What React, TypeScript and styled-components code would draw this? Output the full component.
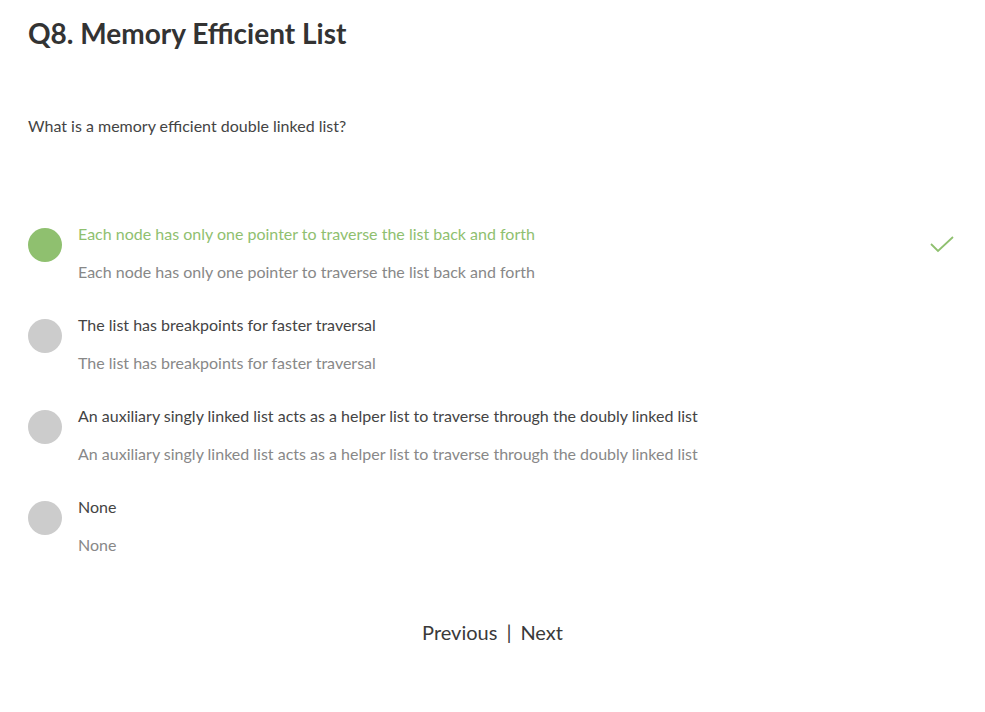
import React from 'react';
import styled, { createGlobalStyle } from 'styled-components';

const GlobalStyle = createGlobalStyle`
	body {
		margin: 0;
		background: #fff;
		font-family: Lato, "Noto Sans", sans-serif;
		color: #333;
	}
`;

interface Option {
	text: string;
	correct: boolean;
}

const options: Option[] = [
	{ text: 'Each node has only one pointer to traverse the list back and forth', correct: true },
	{ text: 'The list has breakpoints for faster traversal', correct: false },
	{ text: 'An auxiliary singly linked list acts as a helper list to traverse through the doubly linked list', correct: false },
	{ text: 'None', correct: false },
];

const Page = styled.div`
	padding: 14px 28px 0 28px;
	width: 985px;
	box-sizing: border-box;
`;

const Title = styled.h1`
	margin: 0;
	font-size: 28px;
	font-weight: 700;
	color: #333;
	line-height: 38px;
`;

const Question = styled.p`
	margin: 64px 0 0 0;
	font-size: 16px;
	color: #444;
	line-height: 20px;
`;

const OptionList = styled.div`
	margin-top: 88px;
	display: flex;
	flex-direction: column;
	gap: 33px;
`;

const OptionRow = styled.div`
	display: flex;
	align-items: flex-start;
	padding-right: 2px;
`;

const Dot = styled.div<{ correct: boolean }>`
	width: 34px;
	height: 34px;
	border-radius: 50%;
	flex-shrink: 0;
	margin-top: 4px;
	background: ${props => (props.correct ? '#8fc06f' : '#cccccc')};
`;

const OptionBody = styled.div`
	flex-grow: 1;
	margin-left: 16px;
	display: flex;
	flex-direction: column;
	gap: 18px;
`;

const OptionText = styled.div<{ correct: boolean }>`
	font-size: 16px;
	line-height: 20px;
	color: ${props => (props.correct ? '#8fc06f' : '#444')};
`;

const OptionSub = styled.div`
	font-size: 16px;
	line-height: 20px;
	color: #888;
`;

const Check = styled.svg`
	flex-shrink: 0;
	margin-top: 12px;
`;

const Nav = styled.div`
	margin-top: 65px;
	display: flex;
	justify-content: center;
	align-items: center;
	gap: 9px;
	font-size: 20px;
	color: #3a3a3a;
`;

const NavLink = styled.span`
	cursor: pointer;
`;

function App(): JSX.Element {
	return (
		<Page>
			<GlobalStyle />
			<Title>Q8. Memory Efficient List</Title>
			<Question>What is a memory efficient double linked list?</Question>
			<OptionList>
				{options.map(o => (
					<OptionRow key={o.text}>
						<Dot correct={o.correct} />
						<OptionBody>
							<OptionText correct={o.correct}>{o.text}</OptionText>
							<OptionSub>{o.text}</OptionSub>
						</OptionBody>
						{o.correct && (
							<Check width="26" height="18" viewBox="0 0 26 18">
								<path d="M2 8 L9 15 L24 1" fill="none" stroke="#8fc06f" strokeWidth="1.8" />
							</Check>
						)}
					</OptionRow>
				))}
			</OptionList>
			<Nav>
				<NavLink>Previous</NavLink>
				<span>|</span>
				<NavLink>Next</NavLink>
			</Nav>
		</Page>
	);
}

export default App;
